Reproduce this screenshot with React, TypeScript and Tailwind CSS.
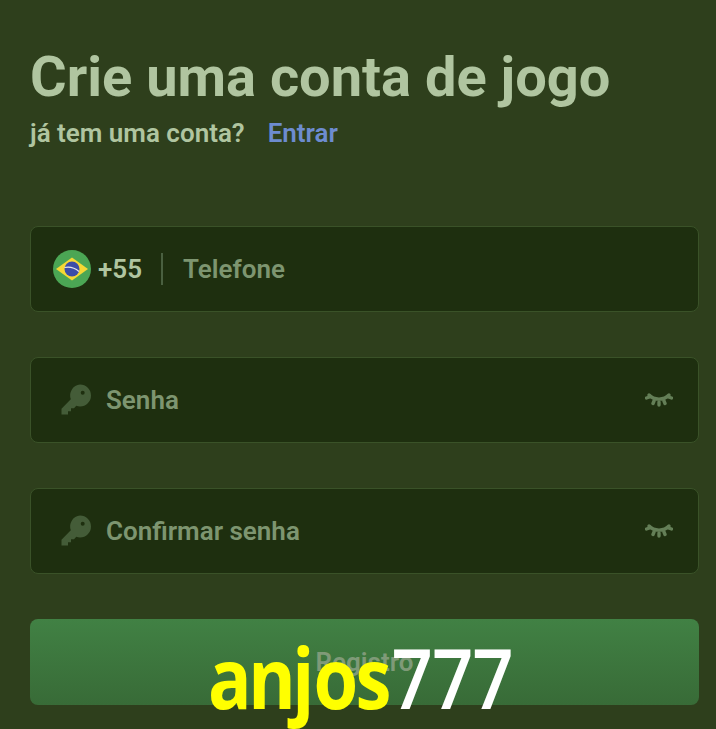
function KeyIcon() {
  return (
    <svg width="32" height="32" viewBox="0 0 32 32" className="shrink-0">
      <path
        fill="#445c38"
        d="M20 .5a11 11 0 0 1 0 22c-1.300 0-2.600-.2-3.700-.7l-2.300 2.400h-3v3H8v3.300H1.500v-5.800l9.300-9.400A11 11 0 0 1 20 .5zm2.700 6.300a2 2 0 1 0 0 4 2 2 0 0 0 0-4z"
      />
    </svg>
  )
}

function EyeClosed() {
  return (
    <svg width="28" height="16" viewBox="0 0 28 16" fill="none" stroke="#647f57" strokeWidth="3.400" strokeLinecap="round" className="shrink-0">
      <path d="M4 3c5 5.500 15 5.500 20 0" />
      <path d="M1.500 6l3-1M26.500 6l-3-1M9 9l-1 2.500M14 10v3M19 9l1 2.500" />
    </svg>
  )
}

function BrazilFlag() {
  return (
    <svg width="38" height="38" viewBox="0 0 38 38" className="shrink-0">
      <circle cx="19" cy="19" r="19" fill="#4ba654" />
      <path d="M19 7.500L35 19 19 30.500 3 19z" fill="#f5d835" />
      <circle cx="19" cy="19" r="7.500" fill="#3b4da8" />
      <path d="M11.500 17.500c5-1 10.500.5 14.500 4" fill="none" stroke="#e8e8e8" strokeWidth="1.200" />
    </svg>
  )
}

function Field({ placeholder }: { placeholder: string }) {
  return (
    <div className="flex h-[86px] items-center rounded-lg border border-[#3a5228] bg-[#1e2f0f] pl-[29px] pr-[25px]">
      <KeyIcon />
      <span className="ml-[14px] flex-1 text-[26px] font-semibold text-[#7d9570]">{placeholder}</span>
      <EyeClosed />
    </div>
  )
}

export default function App() {
  return (
    <div className="relative h-[729px] w-[716px] overflow-hidden bg-[#2e3f1c] font-['Roboto',sans-serif]">
      <div className="flex flex-col pl-[30px] pr-[17px] pt-[43px]">
        <h1 className="text-[56px] font-bold leading-[68px] text-[#b0c5a0]">Crie uma conta de jogo</h1>
        <p className="mt-[6px] text-[26px] font-semibold leading-[32px] text-[#b0c5a0]">
          já tem uma conta?
          <span className="ml-[23px] text-[#6d8ccf]">Entrar</span>
        </p>

        <div className="mt-[77px] flex h-[86px] items-center rounded-lg border border-[#3a5228] bg-[#1e2f0f] pl-[22px]">
          <BrazilFlag />
          <span className="ml-[7px] text-[26px] font-semibold text-[#b0c5a0]">+55</span>
          <div className="ml-[19px] h-[32px] w-[2px] bg-[#4a6040]" />
          <span className="ml-[20px] text-[26px] font-semibold text-[#7d9570]">Telefone</span>
        </div>

        <div className="mt-[45px] flex flex-col gap-[45px]">
          <Field placeholder="Senha" />
          <Field placeholder="Confirmar senha" />
        </div>

        <div className="mt-[45px] flex h-[86px] items-center justify-center rounded-lg bg-gradient-to-b from-[#418144] to-[#386b37] text-[26px] font-semibold text-[#7f9a78]">
          Registro
        </div>
      </div>

      <div className="absolute left-[208px] top-[629px] flex origin-left scale-x-[.86] font-['Open_Sans',sans-serif] text-[84px] font-bold leading-[96px]">
        <span className="tracking-[-4px] text-[#ffff00]">anj</span>
        <span className="ml-[3px] tracking-[-3px] text-[#ffff00]">os</span>
        <span className="ml-[3px] tracking-[-1px] font-semibold text-white">777</span>
      </div>
    </div>
  )
}
